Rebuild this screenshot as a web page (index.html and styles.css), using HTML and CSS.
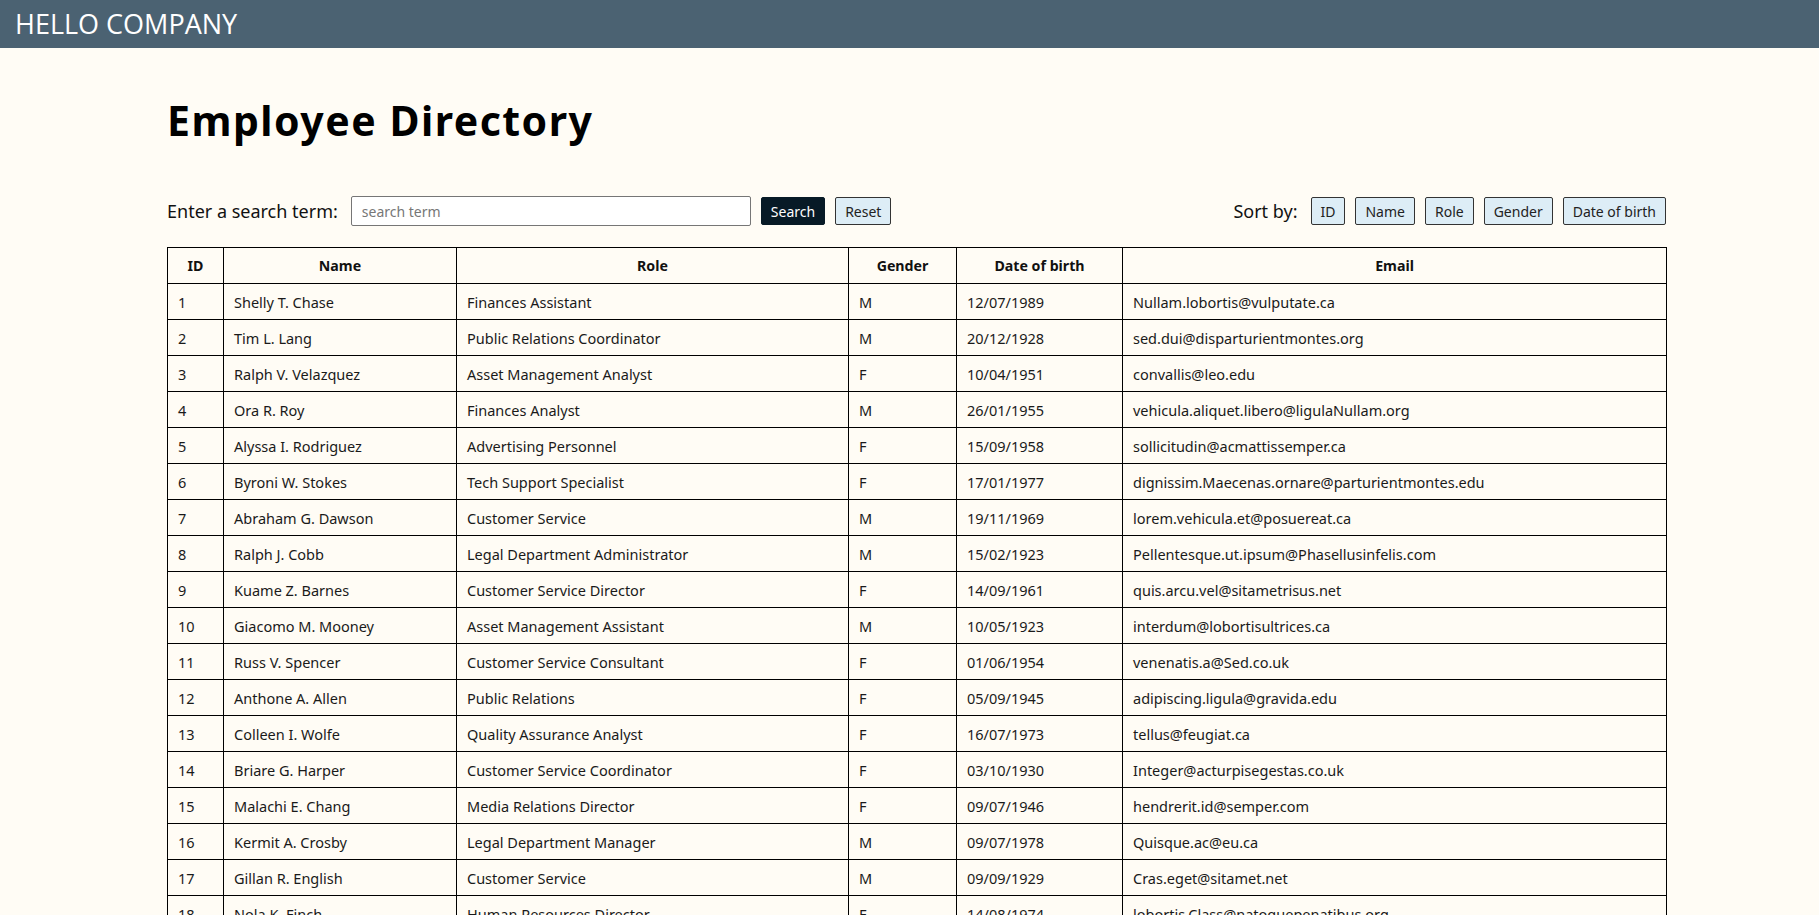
FILE: index.html
```html
<!DOCTYPE html>
<html lang="en">
<head>
<meta charset="utf-8">
<title>Employee Directory</title>
<link rel="stylesheet" href="styles.css">
</head>
<body>
<header class="topbar">HELLO COMPANY</header>
<main class="main">
  <h1 class="title">Employee Directory</h1>
  <div class="controls">
    <div class="search">
      <label class="label" for="term">Enter a search term:</label>
      <input id="term" class="input" type="text" placeholder="search term">
      <button class="btn btn-dark">Search</button>
      <button class="btn btn-light">Reset</button>
    </div>
    <div class="sort">
      <span class="label">Sort by:</span>
      <button class="btn btn-light">ID</button>
      <button class="btn btn-light">Name</button>
      <button class="btn btn-light">Role</button>
      <button class="btn btn-light">Gender</button>
      <button class="btn btn-light">Date of birth</button>
    </div>
  </div>
  <table class="grid">
    <colgroup>
      <col class="c-id"><col class="c-name"><col class="c-role"><col class="c-gender"><col class="c-dob"><col class="c-email">
    </colgroup>
    <thead>
      <tr><th>ID</th><th>Name</th><th>Role</th><th>Gender</th><th>Date of birth</th><th>Email</th></tr>
    </thead>
    <tbody>
      <tr><td>1</td><td>Shelly T. Chase</td><td>Finances Assistant</td><td>M</td><td>12/07/1989</td><td>Nullam.lobortis@vulputate.ca</td></tr>
      <tr><td>2</td><td>Tim L. Lang</td><td>Public Relations Coordinator</td><td>M</td><td>20/12/1928</td><td>sed.dui@disparturientmontes.org</td></tr>
      <tr><td>3</td><td>Ralph V. Velazquez</td><td>Asset Management Analyst</td><td>F</td><td>10/04/1951</td><td>convallis@leo.edu</td></tr>
      <tr><td>4</td><td>Ora R. Roy</td><td>Finances Analyst</td><td>M</td><td>26/01/1955</td><td>vehicula.aliquet.libero@ligulaNullam.org</td></tr>
      <tr><td>5</td><td>Alyssa I. Rodriguez</td><td>Advertising Personnel</td><td>F</td><td>15/09/1958</td><td>sollicitudin@acmattissemper.ca</td></tr>
      <tr><td>6</td><td>Byroni W. Stokes</td><td>Tech Support Specialist</td><td>F</td><td>17/01/1977</td><td>dignissim.Maecenas.ornare@parturientmontes.edu</td></tr>
      <tr><td>7</td><td>Abraham G. Dawson</td><td>Customer Service</td><td>M</td><td>19/11/1969</td><td>lorem.vehicula.et@posuereat.ca</td></tr>
      <tr><td>8</td><td>Ralph J. Cobb</td><td>Legal Department Administrator</td><td>M</td><td>15/02/1923</td><td>Pellentesque.ut.ipsum@Phasellusinfelis.com</td></tr>
      <tr><td>9</td><td>Kuame Z. Barnes</td><td>Customer Service Director</td><td>F</td><td>14/09/1961</td><td>quis.arcu.vel@sitametrisus.net</td></tr>
      <tr><td>10</td><td>Giacomo M. Mooney</td><td>Asset Management Assistant</td><td>M</td><td>10/05/1923</td><td>interdum@lobortisultrices.ca</td></tr>
      <tr><td>11</td><td>Russ V. Spencer</td><td>Customer Service Consultant</td><td>F</td><td>01/06/1954</td><td>venenatis.a@Sed.co.uk</td></tr>
      <tr><td>12</td><td>Anthone A. Allen</td><td>Public Relations</td><td>F</td><td>05/09/1945</td><td>adipiscing.ligula@gravida.edu</td></tr>
      <tr><td>13</td><td>Colleen I. Wolfe</td><td>Quality Assurance Analyst</td><td>F</td><td>16/07/1973</td><td>tellus@feugiat.ca</td></tr>
      <tr><td>14</td><td>Briare G. Harper</td><td>Customer Service Coordinator</td><td>F</td><td>03/10/1930</td><td>Integer@acturpisegestas.co.uk</td></tr>
      <tr><td>15</td><td>Malachi E. Chang</td><td>Media Relations Director</td><td>F</td><td>09/07/1946</td><td>hendrerit.id@semper.com</td></tr>
      <tr><td>16</td><td>Kermit A. Crosby</td><td>Legal Department Manager</td><td>M</td><td>09/07/1978</td><td>Quisque.ac@eu.ca</td></tr>
      <tr><td>17</td><td>Gillan R. English</td><td>Customer Service</td><td>M</td><td>09/09/1929</td><td>Cras.eget@sitamet.net</td></tr>
      <tr><td>18</td><td>Nola K. Finch</td><td>Human Resources Director</td><td>F</td><td>14/08/1974</td><td>lobortis.Class@natoquepenatibus.org</td></tr>
    </tbody>
  </table>
</main>
</body>
</html>
```

FILE: styles.css
```css
html, body {
  margin: 0;
  padding: 0;
}
body {
  background: #fffcf5;
  color: #111;
  font-family: "Noto Sans", "Open Sans", sans-serif;
}
.topbar {
  height: 48px;
  line-height: 48px;
  background: #4b6272;
  color: #fff;
  font-family: "Open Sans", "Noto Sans", sans-serif;
  font-size: 27px;
  padding-left: 15px;
}
.main {
  margin: 0 153px 0 167px;
  padding-bottom: 30px;
}
.title {
  margin: 48px 0 0 0;
  font-size: 41px;
  line-height: 48px;
  letter-spacing: 1.5px;
  font-weight: 700;
  color: #000;
}
.controls {
  margin-top: 52px;
  height: 30px;
  display: flex;
  justify-content: space-between;
  align-items: center;
}
.search, .sort {
  display: flex;
  align-items: center;
  gap: 10px;
}
.label {
  font-size: 18px;
  color: #111;
  margin-right: 3px;
}
.input {
  box-sizing: border-box;
  width: 400px;
  height: 30px;
  border: 1px solid #767676;
  border-radius: 2px;
  background: #fff;
  padding: 0 10px;
  font-family: "Noto Sans", sans-serif;
  font-size: 14px;
}
.input::placeholder {
  color: #777;
}
.btn {
  box-sizing: border-box;
  height: 28px;
  padding: 0 9px;
  border-radius: 2px;
  font-family: "Noto Sans", sans-serif;
  font-size: 14px;
  cursor: pointer;
}
.btn-dark {
  background: #071a26;
  color: #fff;
  border: 1px solid #071a26;
}
.btn-light {
  background: #ddedf6;
  color: #222;
  border: 1px solid #333;
}
.grid {
  margin-top: 21px;
  width: 1499px;
  table-layout: fixed;
  border-collapse: collapse;
  font-size: 14.5px;
}
.c-id { width: 56px; }
.c-name { width: 233px; }
.c-role { width: 392px; }
.c-gender { width: 108px; }
.c-dob { width: 166px; }
.c-email { width: 544px; }
.grid tr {
  height: 36px;
}
.grid th, .grid td {
  border: 1px solid #000;
  height: 36px;
  padding: 0 10px;
  box-sizing: border-box;
  white-space: nowrap;
  overflow: hidden;
}
.grid th {
  font-weight: 700;
  text-align: center;
  font-size: 14.2px;
}
.grid td {
  text-align: left;
  color: #1a1a1a;
}
```
